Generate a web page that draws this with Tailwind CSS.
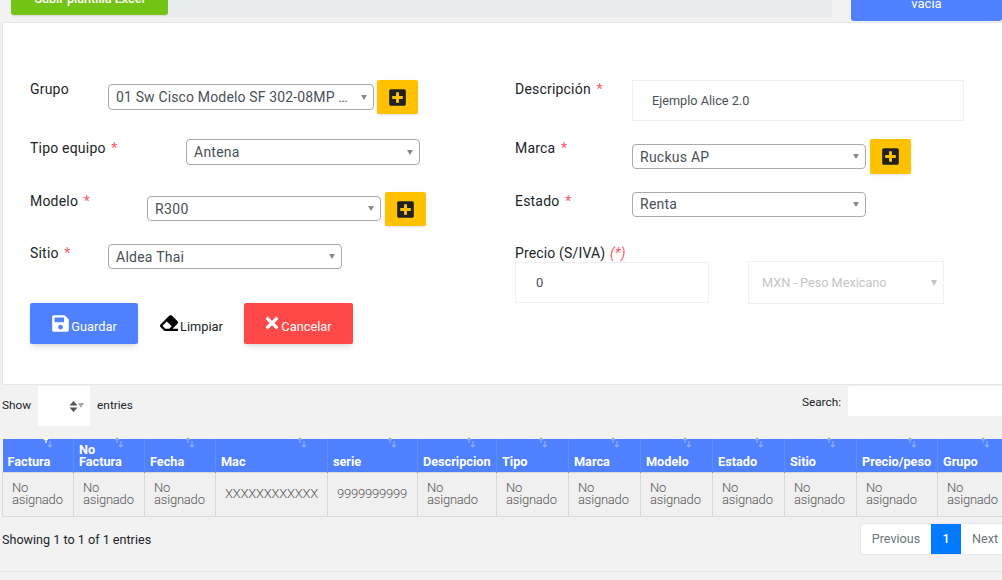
<!DOCTYPE html>
<html lang="en">
<head>
  <meta charset="UTF-8">
  <title>Equipos</title>
  <script src="https://cdn.jsdelivr.net/npm/@tailwindcss/browser@4"></script>
</head>
<body class="bg-[#f2f2f2] font-[family-name:Roboto,sans-serif] text-[14px] text-[#212529]">
<div class="w-[1002px] h-[580px] overflow-hidden relative">

  <!-- top buttons, cut by the window -->
  <div class="flex h-[22px] items-start">
    <div class="ml-[11px] w-[157px] h-[15px] bg-[#74c416] rounded-b-[3px] shadow-sm text-white text-[12.6px] font-medium flex items-end justify-center leading-[13px] pb-[10px] overflow-hidden">Subir plantilla Excel</div>
    <div class="w-[664px] h-[17px] bg-[#e9ecef]"></div>
    <div class="ml-[19px] w-[151px] h-[21px] bg-[#4f81ff] rounded-b-[3px] text-white text-[13px] flex justify-center leading-[8px]">vacia</div>
  </div>

  <!-- form card -->
  <div class="ml-[2px] h-[363px] bg-white border border-[#e6e6e6] border-r-0 flex pt-[57px]">
    <!-- left column -->
    <div class="w-[485px] pl-[27px]">
      <div class="flex items-start h-[34px]">
        <label class="w-[78px] mt-[-1px] leading-5 tracking-[0.2px]">Grupo</label>
        <div class="mt-[4px] w-[266px] h-[26px] border border-[#aaa] rounded-[4px] flex items-center justify-between pl-[7px] pr-[6px] text-[#495057] tracking-[0.15px]">
          <span class="truncate w-[233px]">01 Sw Cisco Modelo SF 302-08MP Switch</span>
          <span class="w-0 h-0 border-x-[3.5px] border-x-transparent border-t-[5px] border-t-[#888]"></span>
        </div>
        <button class="ml-[3px] w-[41px] h-[34px] bg-[#ffc100] rounded-[2px] shadow-sm flex items-center justify-center">
          <svg class="w-[17px] h-[19px]" viewBox="0 0 448 512"><path fill="#212121" d="M400 32H48C21.5 32 0 53.5 0 80v352c0 26.5 21.5 48 48 48h352c26.5 0 48-21.5 48-48V80c0-26.5-21.5-48-48-48zm-32 252c0 6.6-5.4 12-12 12h-92v92c0 6.6-5.4 12-12 12h-56c-6.6 0-12-5.4-12-12v-92H92c-6.6 0-12-5.4-12-12v-56c0-6.6 5.4-12 12-12h92v-92c0-6.6 5.4-12 12-12h56c6.6 0 12 5.4 12 12v92h92c6.6 0 12 5.4 12 12v56z"/></svg>
        </button>
      </div>
      <div class="flex items-start mt-[25px] h-[26px]">
        <label class="w-[156px] mt-[-1px] leading-5 tracking-[0.2px]">Tipo equipo <span class="text-[#ff5a6a] ml-[2px]">*</span></label>
        <div class="w-[234px] h-[26px] border border-[#aaa] rounded-[4px] flex items-center justify-between pl-[7px] pr-[6px] text-[#495057] tracking-[0.25px]">
          <span>Antena</span>
          <span class="w-0 h-0 border-x-[3.5px] border-x-transparent border-t-[5px] border-t-[#888]"></span>
        </div>
      </div>
      <div class="flex items-start mt-[27px] h-[34px]">
        <label class="w-[117px] mt-[-1px] leading-5 tracking-[0.2px]">Modelo <span class="text-[#ff5a6a] ml-[2px]">*</span></label>
        <div class="mt-[4px] w-[234px] h-[25px] border border-[#aaa] rounded-[4px] flex items-center justify-between pl-[7px] pr-[6px] text-[#495057] tracking-[0.35px]">
          <span class="pt-[2px]">R300</span>
          <span class="w-0 h-0 border-x-[3.5px] border-x-transparent border-t-[5px] border-t-[#888]"></span>
        </div>
        <button class="ml-[4px] w-[41px] h-[34px] bg-[#ffc100] rounded-[2px] shadow-sm flex items-center justify-center">
          <svg class="w-[17px] h-[19px]" viewBox="0 0 448 512"><path fill="#212121" d="M400 32H48C21.5 32 0 53.5 0 80v352c0 26.5 21.5 48 48 48h352c26.5 0 48-21.5 48-48V80c0-26.5-21.5-48-48-48zm-32 252c0 6.6-5.4 12-12 12h-92v92c0 6.6-5.4 12-12 12h-56c-6.6 0-12-5.4-12-12v-92H92c-6.6 0-12-5.4-12-12v-56c0-6.6 5.4-12 12-12h92v-92c0-6.6 5.4-12 12-12h56c6.6 0 12 5.4 12 12v92h92c6.6 0 12 5.4 12 12v56z"/></svg>
        </button>
      </div>
      <div class="flex items-start mt-[18px] h-[25px]">
        <label class="w-[78px] mt-[-1px] leading-5 tracking-[0.2px]">Sitio <span class="text-[#ff5a6a] ml-[2px]">*</span></label>
        <div class="w-[234px] h-[25px] border border-[#aaa] rounded-[4px] flex items-center justify-between pl-[7px] pr-[6px] text-[#495057] tracking-[0.25px]">
          <span class="pt-[2px]">Aldea Thai</span>
          <span class="w-0 h-0 border-x-[3.5px] border-x-transparent border-t-[5px] border-t-[#888]"></span>
        </div>
      </div>
      <div class="flex items-center mt-[34px] h-[41px] text-[12.8px]">
        <button class="w-[108px] h-[41px] bg-[#4f81ff] rounded-[2px] shadow-md text-white flex items-center justify-center gap-[2px] pl-[1px]">
          <svg class="w-[17px] h-[19px] -mt-[1px]" viewBox="0 0 448 512"><path fill="#fff" d="M433.941 129.941l-83.882-83.882A48 48 0 0 0 316.118 32H48C21.49 32 0 53.49 0 80v352c0 26.51 21.49 48 48 48h352c26.51 0 48-21.49 48-48V163.882a48 48 0 0 0-14.059-33.941zM224 416c-35.346 0-64-28.654-64-64 0-35.346 28.654-64 64-64s64 28.654 64 64c0 35.346-28.654 64-64 64zm96-304.52V212c0 6.627-5.373 12-12 12H76c-6.627 0-12-5.373-12-12V108c0-6.627 5.373-12 12-12h228.52c3.183 0 6.235 1.264 8.485 3.515l3.48 3.48A11.996 11.996 0 0 1 320 111.48z"/></svg>
          <span class="pt-[6px]">Guardar</span>
        </button>
        <button class="ml-[22px] w-[64px] h-[41px] flex items-center text-[#212529] gap-[2px] whitespace-nowrap">
          <svg class="w-[18px] h-[18px] shrink-0 -mt-[1px]" viewBox="0 0 512 512"><path fill="#000" d="M497.941 273.941c18.745-18.745 18.745-49.137 0-67.882l-160-160c-18.745-18.745-49.137-18.745-67.882 0l-256 256c-18.745 18.745-18.745 49.137 0 67.882l96 96A48.004 48.004 0 0 0 144 480h356c6.627 0 12-5.373 12-12v-40c0-6.627-5.373-12-12-12H355.883l142.058-142.059zm-302.627-62.627l137.373 137.373L265.373 416H150.628l-80-80 124.686-124.686z"/></svg>
          <span class="pt-[6px]">Limpiar</span>
        </button>
        <button class="ml-[20px] w-[109px] h-[41px] bg-[#ff4848] rounded-[2px] shadow-md text-white flex items-center justify-center gap-[2px]">
          <svg class="w-[14px] h-[18px] -mt-[1px]" viewBox="0 0 352 512"><path fill="#fff" d="M242.72 256l100.07-100.07c12.28-12.28 12.28-32.19 0-44.48l-22.24-22.24c-12.28-12.28-32.19-12.28-44.48 0L176 189.28 75.93 89.21c-12.28-12.28-32.19-12.28-44.48 0L9.21 111.45c-12.28 12.28-12.28 32.19 0 44.48L109.28 256 9.21 356.07c-12.28 12.28-12.28 32.19 0 44.48l22.24 22.24c12.28 12.28 32.2 12.28 44.48 0L176 322.72l100.07 100.07c12.28 12.28 32.2 12.28 44.48 0l22.24-22.24c12.28-12.28 12.28-32.19 0-44.48L242.72 256z"/></svg>
          <span class="pt-[6px]">Cancelar</span>
        </button>
      </div>
    </div>

    <!-- right column -->
    <div class="flex-1 pl-[27px]">
      <div class="flex items-start h-[41px]">
        <label class="w-[117px] mt-[-1px] leading-5 tracking-[0.2px]">Descripción <span class="text-[#ff5a6a] ml-[2px]">*</span></label>
        <div class="w-[332px] h-[41px] border border-[#f0f0f0] flex items-center pl-[19px] text-[12.7px] text-[#495057]">Ejemplo Alice 2.0</div>
      </div>
      <div class="flex items-start mt-[18px] h-[35px]">
        <label class="w-[117px] mt-[-1px] leading-5 tracking-[0.2px]">Marca <span class="text-[#ff5a6a] ml-[2px]">*</span></label>
        <div class="mt-[5px] w-[234px] h-[25px] border border-[#aaa] rounded-[4px] flex items-center justify-between pl-[7px] pr-[6px] text-[#495057] tracking-[0.25px]">
          <span class="pt-[2px]">Ruckus AP</span>
          <span class="w-0 h-0 border-x-[3.5px] border-x-transparent border-t-[5px] border-t-[#888]"></span>
        </div>
        <button class="ml-[4px] w-[41px] h-[35px] bg-[#ffc100] rounded-[2px] shadow-sm flex items-center justify-center">
          <svg class="w-[17px] h-[19px]" viewBox="0 0 448 512"><path fill="#212121" d="M400 32H48C21.5 32 0 53.5 0 80v352c0 26.5 21.5 48 48 48h352c26.5 0 48-21.5 48-48V80c0-26.5-21.5-48-48-48zm-32 252c0 6.6-5.4 12-12 12h-92v92c0 6.6-5.4 12-12 12h-56c-6.6 0-12-5.4-12-12v-92H92c-6.6 0-12-5.4-12-12v-56c0-6.6 5.4-12 12-12h92v-92c0-6.6 5.4-12 12-12h56c6.6 0 12 5.4 12 12v92h92c6.6 0 12 5.4 12 12v56z"/></svg>
        </button>
      </div>
      <div class="flex items-start mt-[18px] h-[25px]">
        <label class="w-[117px] mt-[-1px] leading-5 tracking-[0.2px]">Estado <span class="text-[#ff5a6a] ml-[2px]">*</span></label>
        <div class="w-[234px] h-[25px] border border-[#aaa] rounded-[4px] flex items-center justify-between pl-[7px] pr-[6px] text-[#495057] tracking-[0.25px]">
          <span>Renta</span>
          <span class="w-0 h-0 border-x-[3.5px] border-x-transparent border-t-[5px] border-t-[#888]"></span>
        </div>
      </div>
      <label class="block mt-[26px] h-[20px] leading-5 tracking-[0.15px]">Precio (S/IVA) <em class="text-[#ff5a6a] ml-[1px]">(*)</em></label>
      <div class="flex items-start -mt-[2px]">
        <div class="mt-px w-[194px] h-[41px] border border-[#f0f0f0] flex items-center pl-[20px] text-[13px] text-[#495057]">0</div>
        <div class="ml-[39px] w-[196px] h-[43px] border border-[#f0f0f0] flex items-center justify-between pl-[13px] pr-[6px] text-[12.7px] text-[#c4c4c4]">
          <span>MXN - Peso Mexicano</span>
          <span class="w-0 h-0 border-x-[3px] border-x-transparent border-t-[6px] border-t-[#c4c4c4]"></span>
        </div>
      </div>
    </div>
  </div>

  <!-- datatable controls -->
  <div class="flex items-start h-[54px] pt-[1px] text-[11.8px]">
    <span class="mt-[11px] ml-[2px]">Show</span>
    <div class="ml-[7px] w-[52px] h-[40px] bg-white relative flex items-center justify-end pr-[6px]">
      <svg class="w-[9px] h-[11px]" viewBox="0 0 9 11"><path fill="#555" d="M4.5 0 8.5 4.5H.5zM.5 6.5h8L4.5 11z"/></svg>
      <span class="w-0 h-0 border-x-[3px] border-x-transparent border-t-[5px] border-t-[#aaa] -mt-[2px]"></span>
    </div>
    <span class="mt-[11px] ml-[7px]">entries</span>
    <span class="mt-[8px] ml-auto">Search:</span>
    <div class="ml-[7px] w-[154px] h-[30px] bg-white rounded-l-[2px]"></div>
  </div>

  <!-- table -->
  <table class="ml-[2px] table-fixed border-collapse w-[1007px]">
    <colgroup>
      <col class="w-[71px]"><col class="w-[71px]"><col class="w-[71px]"><col class="w-[112px]"><col class="w-[90px]"><col class="w-[79px]"><col class="w-[72px]"><col class="w-[72px]"><col class="w-[72px]"><col class="w-[72px]"><col class="w-[72px]"><col class="w-[81px]"><col class="w-[72px]">
    </colgroup>
    <thead class="bg-[#4f81ff] text-white text-[12.7px] font-bold leading-[12px]">
      <tr class="h-[33px] text-left">
        <th class="relative align-bottom pl-[5px] pb-[4px] font-bold border-r border-[#5f8cff]">Factura<svg class="absolute -top-[2px] right-[20px] w-[10px] h-[12px]" viewBox="0 0 10 12"><path fill="none" stroke="#fff" stroke-width="1.2" d="M3 6V1M1 3l2-2 2 2"/><path fill="none" stroke="#8eaeff" stroke-width="1.2" d="M7 4v6M5 8l2 2 2-2"/></svg></th>
        <th class="relative align-bottom pl-[5px] pr-[10px] pb-[4px] font-bold border-r border-[#5f8cff]">No Factura<svg class="absolute -top-[2px] right-[20px] w-[10px] h-[12px]" viewBox="0 0 10 12"><path fill="none" stroke="#8eaeff" stroke-width="1.2" d="M3 6V1M1 3l2-2 2 2M7 4v6M5 8l2 2 2-2"/></svg></th>
        <th class="relative align-bottom pl-[5px] pb-[4px] font-bold border-r border-[#5f8cff]">Fecha<svg class="absolute -top-[2px] right-[20px] w-[10px] h-[12px]" viewBox="0 0 10 12"><path fill="none" stroke="#8eaeff" stroke-width="1.2" d="M3 6V1M1 3l2-2 2 2M7 4v6M5 8l2 2 2-2"/></svg></th>
        <th class="relative align-bottom pl-[5px] pb-[4px] font-bold border-r border-[#5f8cff]">Mac<svg class="absolute -top-[2px] right-[20px] w-[10px] h-[12px]" viewBox="0 0 10 12"><path fill="none" stroke="#8eaeff" stroke-width="1.2" d="M3 6V1M1 3l2-2 2 2M7 4v6M5 8l2 2 2-2"/></svg></th>
        <th class="relative align-bottom pl-[5px] pb-[4px] font-bold border-r border-[#5f8cff]">serie<svg class="absolute -top-[2px] right-[20px] w-[10px] h-[12px]" viewBox="0 0 10 12"><path fill="none" stroke="#8eaeff" stroke-width="1.2" d="M3 6V1M1 3l2-2 2 2M7 4v6M5 8l2 2 2-2"/></svg></th>
        <th class="relative align-bottom pl-[5px] pb-[4px] font-bold border-r border-[#5f8cff]">Descripcion<svg class="absolute -top-[2px] right-[20px] w-[10px] h-[12px]" viewBox="0 0 10 12"><path fill="none" stroke="#8eaeff" stroke-width="1.2" d="M3 6V1M1 3l2-2 2 2M7 4v6M5 8l2 2 2-2"/></svg></th>
        <th class="relative align-bottom pl-[5px] pb-[4px] font-bold border-r border-[#5f8cff]">Tipo<svg class="absolute -top-[2px] right-[20px] w-[10px] h-[12px]" viewBox="0 0 10 12"><path fill="none" stroke="#8eaeff" stroke-width="1.2" d="M3 6V1M1 3l2-2 2 2M7 4v6M5 8l2 2 2-2"/></svg></th>
        <th class="relative align-bottom pl-[5px] pb-[4px] font-bold border-r border-[#5f8cff]">Marca<svg class="absolute -top-[2px] right-[20px] w-[10px] h-[12px]" viewBox="0 0 10 12"><path fill="none" stroke="#8eaeff" stroke-width="1.2" d="M3 6V1M1 3l2-2 2 2M7 4v6M5 8l2 2 2-2"/></svg></th>
        <th class="relative align-bottom pl-[5px] pb-[4px] font-bold border-r border-[#5f8cff]">Modelo<svg class="absolute -top-[2px] right-[20px] w-[10px] h-[12px]" viewBox="0 0 10 12"><path fill="none" stroke="#8eaeff" stroke-width="1.2" d="M3 6V1M1 3l2-2 2 2M7 4v6M5 8l2 2 2-2"/></svg></th>
        <th class="relative align-bottom pl-[5px] pb-[4px] font-bold border-r border-[#5f8cff]">Estado<svg class="absolute -top-[2px] right-[20px] w-[10px] h-[12px]" viewBox="0 0 10 12"><path fill="none" stroke="#8eaeff" stroke-width="1.2" d="M3 6V1M1 3l2-2 2 2M7 4v6M5 8l2 2 2-2"/></svg></th>
        <th class="relative align-bottom pl-[5px] pb-[4px] font-bold border-r border-[#5f8cff]">Sitio<svg class="absolute -top-[2px] right-[20px] w-[10px] h-[12px]" viewBox="0 0 10 12"><path fill="none" stroke="#8eaeff" stroke-width="1.2" d="M3 6V1M1 3l2-2 2 2M7 4v6M5 8l2 2 2-2"/></svg></th>
        <th class="relative align-bottom pl-[5px] pb-[4px] font-bold border-r border-[#5f8cff] whitespace-nowrap">Precio/peso<svg class="absolute -top-[2px] right-[20px] w-[10px] h-[12px]" viewBox="0 0 10 12"><path fill="none" stroke="#8eaeff" stroke-width="1.2" d="M3 6V1M1 3l2-2 2 2M7 4v6M5 8l2 2 2-2"/></svg></th>
        <th class="relative align-bottom pl-[5px] pb-[4px] font-bold">Grupo<svg class="absolute -top-[2px] right-[20px] w-[10px] h-[12px]" viewBox="0 0 10 12"><path fill="none" stroke="#8eaeff" stroke-width="1.2" d="M3 6V1M1 3l2-2 2 2M7 4v6M5 8l2 2 2-2"/></svg></th>
      </tr>
    </thead>
    <tbody class="bg-[#f0f0f0] text-[#555] font-light leading-[12px] text-[13px] tracking-[-0.2px]">
      <tr class="h-[44px] text-left">
        <td class="border border-[#d9d9d9] pl-[9px]">No asignado</td>
        <td class="border border-[#d9d9d9] pl-[9px]">No asignado</td>
        <td class="border border-[#d9d9d9] pl-[9px]">No asignado</td>
        <td class="border border-[#d9d9d9] pl-[9px]">XXXXXXXXXXXX</td>
        <td class="border border-[#d9d9d9] pl-[9px]">9999999999</td>
        <td class="border border-[#d9d9d9] pl-[9px]">No asignado</td>
        <td class="border border-[#d9d9d9] pl-[9px]">No asignado</td>
        <td class="border border-[#d9d9d9] pl-[9px]">No asignado</td>
        <td class="border border-[#d9d9d9] pl-[9px]">No asignado</td>
        <td class="border border-[#d9d9d9] pl-[9px]">No asignado</td>
        <td class="border border-[#d9d9d9] pl-[9px]">No asignado</td>
        <td class="border border-[#d9d9d9] pl-[9px] pr-[12px]">No asignado</td>
        <td class="border border-[#d9d9d9] pl-[9px]">No asignado</td>
      </tr>
    </tbody>
  </table>

  <!-- table footer -->
  <div class="flex items-start justify-between pl-[2px] mt-[6px] text-[12.6px]">
    <span class="mt-[7px] leading-5">Showing 1 to 1 of 1 entries</span>
    <div class="flex h-[32px] w-[146px] shrink-0 -mr-[4px] bg-white border border-[#e3e6ea] rounded-[4px] overflow-hidden text-[#6c757d] leading-[30px]">
      <span class="w-[70px] text-center">Previous</span>
      <span class="w-[30px] bg-[#007bff] text-white text-center font-medium">1</span>
      <span class="pl-[11px]">Next</span>
    </div>
  </div>
  <div class="mt-[16px] border-t border-[#e6e6e6]"></div>
</div>
</body>
</html>
